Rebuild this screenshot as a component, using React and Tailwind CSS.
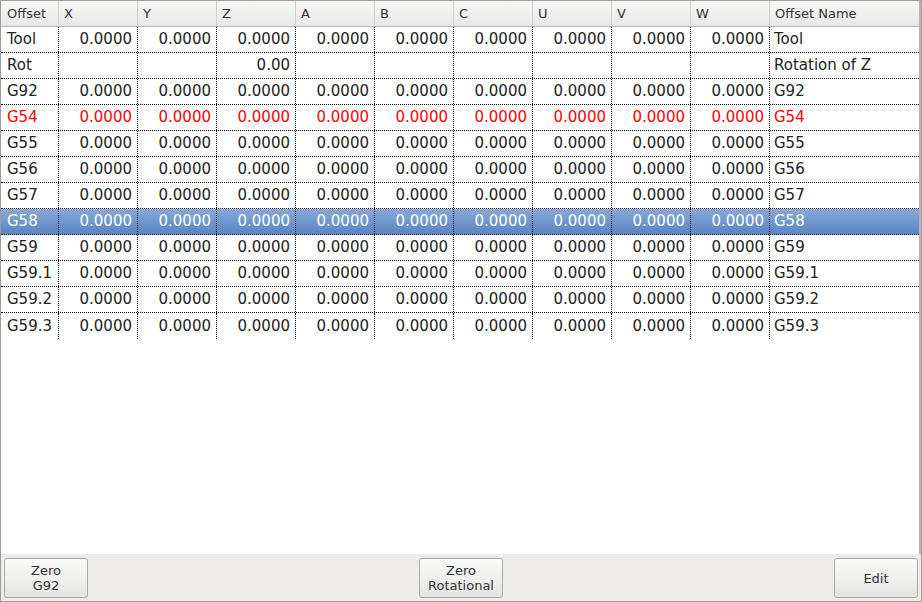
const axes = ["X", "Y", "Z", "A", "B", "C", "U", "V", "W"]

const zeros = axes.map(() => "0.0000")

const rows = [
  { label: "Tool", values: zeros, name: "Tool" },
  { label: "Rot", values: ["", "", "0.00", "", "", "", "", "", ""], name: "Rotation of Z" },
  { label: "G92", values: zeros, name: "G92" },
  { label: "G54", values: zeros, name: "G54", active: true },
  { label: "G55", values: zeros, name: "G55" },
  { label: "G56", values: zeros, name: "G56" },
  { label: "G57", values: zeros, name: "G57" },
  { label: "G58", values: zeros, name: "G58", selected: true },
  { label: "G59", values: zeros, name: "G59" },
  { label: "G59.1", values: zeros, name: "G59.1" },
  { label: "G59.2", values: zeros, name: "G59.2" },
  { label: "G59.3", values: zeros, name: "G59.3" },
]

const cols = "grid grid-cols-[58px_repeat(9,79px)_1fr]"

function Header() {
  const heads = ["Offset", ...axes, "Offset Name"]
  return (
    <div className={`${cols} h-[26px] border-b border-[#b6b6b3] bg-gradient-to-b from-[#f8f8f7] to-[#e9e8e6] text-[13px] text-[#2e3436]`}>
      {heads.map((h, i) => (
        <div
          key={h}
          className={`flex items-center ${i === 0 ? "pl-[6px]" : "pl-[5px]"} ${i < heads.length - 1 ? "border-r border-[#cfcfcd]" : ""}`}
        >
          {h}
        </div>
      ))}
    </div>
  )
}

function Row({ row, last }) {
  let tone = "text-[#222222]"
  if (row.active) tone = "text-[#ff0000]"
  if (row.selected) tone = "text-white bg-gradient-to-b from-[#87a9d9] to-[#5a85c2]"
  return (
    <div className={`${cols} h-[26px] text-[15px] ${tone} ${last ? "" : "border-b border-dotted border-black"}`}>
      <div className="flex items-center pl-[6px] border-r border-dotted border-black">{row.label}</div>
      {row.values.map((v, i) => (
        <div key={i} className="flex items-center justify-end pr-[5px] border-r border-dotted border-black">
          {v}
        </div>
      ))}
      <div className="flex items-center pl-[4px]">{row.name}</div>
    </div>
  )
}

function Button({ children }) {
  return (
    <button className="w-[84px] h-[40px] rounded-[3px] border border-[#a9a9a6] bg-gradient-to-b from-[#fafaf9] to-[#e6e5e3] text-[13px] leading-[15px] text-[#2e3436] flex flex-col items-center justify-center">
      {children}
    </button>
  )
}

export default function App() {
  return (
    <div
      className="w-[922px] h-[602px] bg-[#edecea] border border-[#9c9c9a] flex flex-col"
      style={{ fontFamily: "'DejaVu Sans', Verdana, sans-serif" }}
    >
      <div className="flex-1 bg-white border-r-2 border-[#b4b4b1]">
        <Header />
        {rows.map((r, i) => (
          <Row key={r.label} row={r} last={i === rows.length - 1} />
        ))}
      </div>
      <div className="h-[47px] flex items-center justify-between px-[3px] pt-[2px] pb-[1px]">
        <Button>
          <span>Zero</span>
          <span>G92</span>
        </Button>
        <Button>
          <span>Zero</span>
          <span>Rotational</span>
        </Button>
        <Button>Edit</Button>
      </div>
    </div>
  )
}
